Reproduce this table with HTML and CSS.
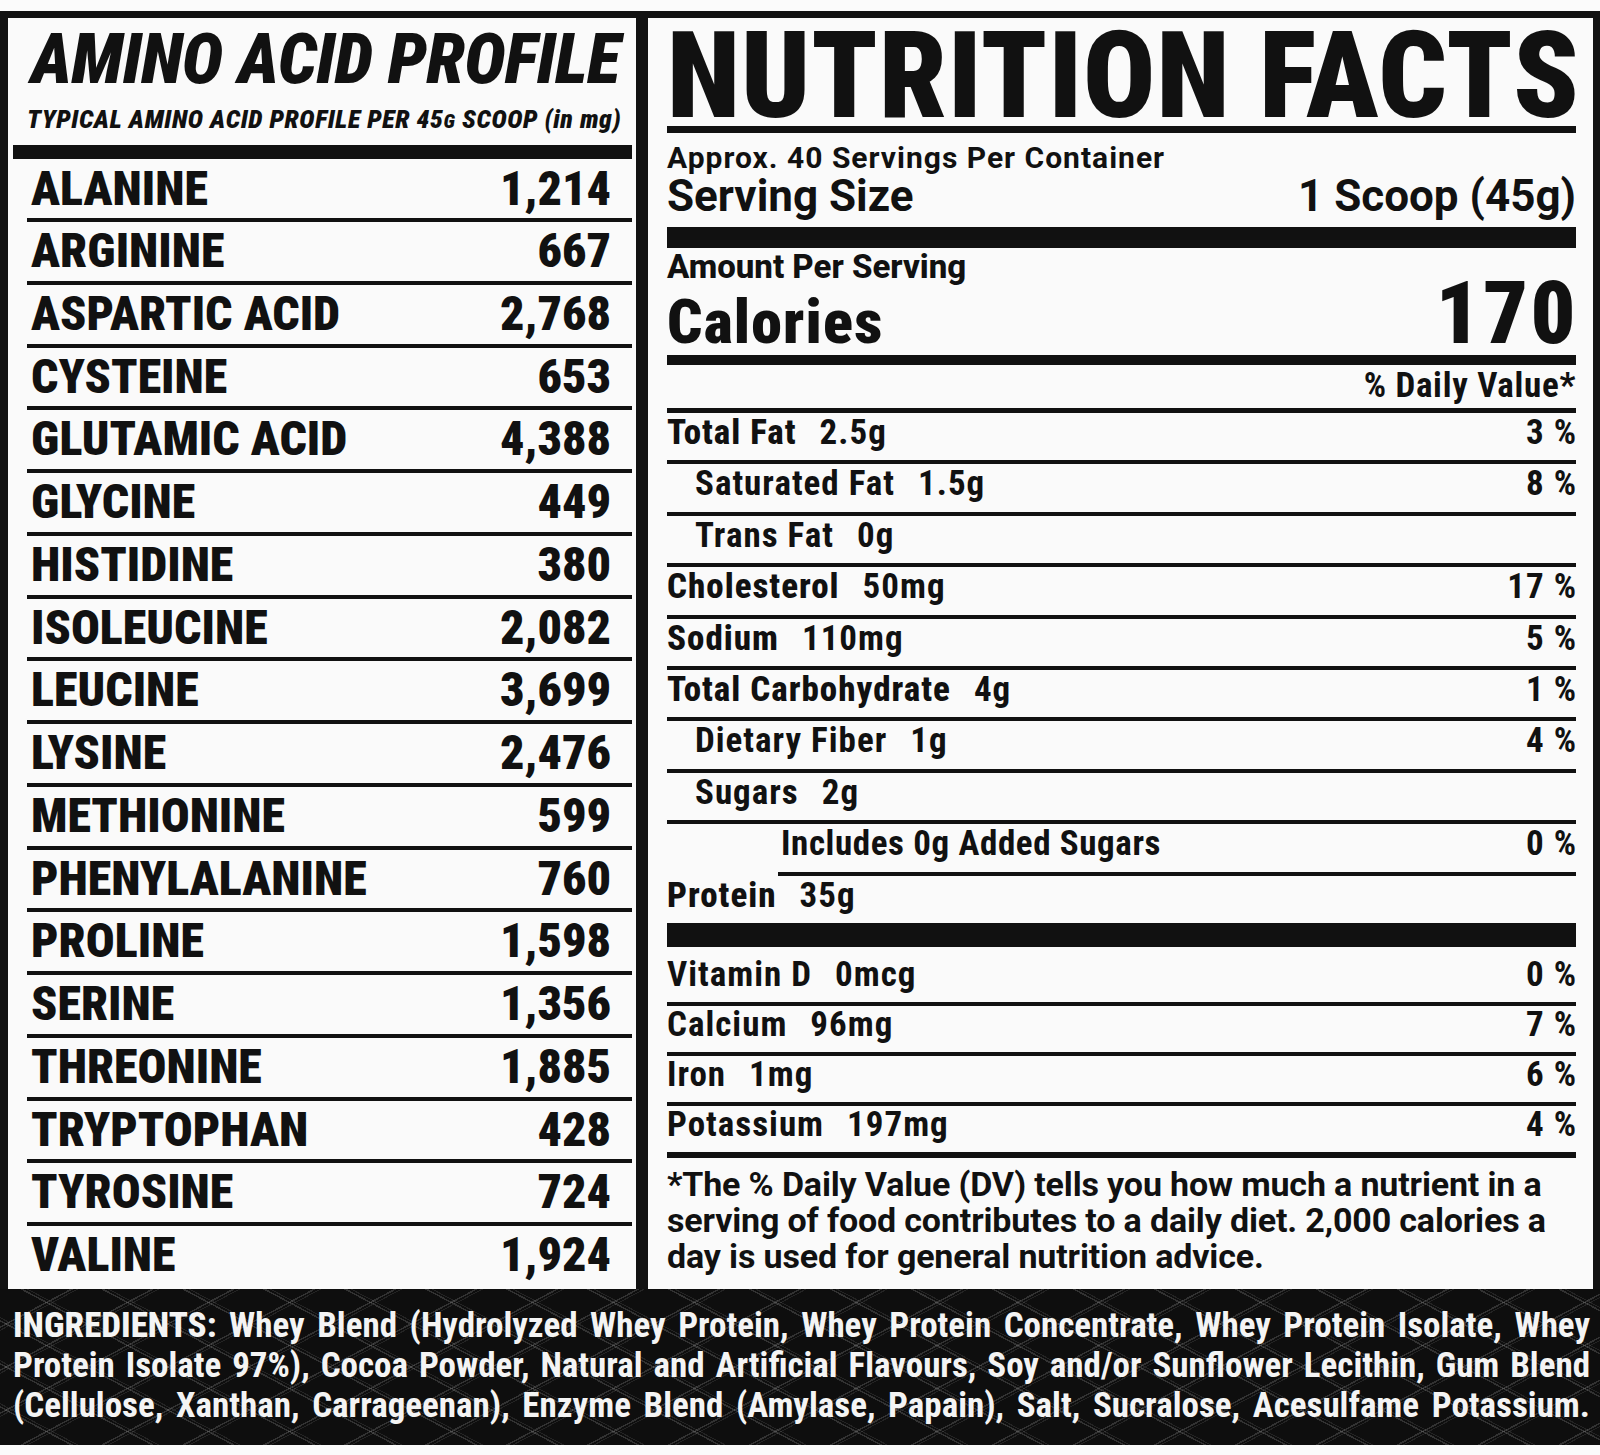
FILE: index.html
```html
<!DOCTYPE html>
<html lang="en">
<head>
<meta charset="utf-8">
<title>Amino Acid Profile &amp; Nutrition Facts</title>
<link rel="stylesheet" href="styles.css">
</head>
<body>
<div class="label">
  <div class="panels">
    <section class="amino">
      <h1 class="amino-title">AMINO ACID PROFILE</h1>
      <p class="amino-sub">TYPICAL AMINO ACID PROFILE PER 45<span class="small-g">G</span> SCOOP (in mg)</p>
      <div class="amino-bar"></div>
      <div class="amino-list">
        <div class="arow"><span>ALANINE</span><span>1,214</span></div>
        <div class="arow"><span>ARGININE</span><span>667</span></div>
        <div class="arow"><span>ASPARTIC ACID</span><span>2,768</span></div>
        <div class="arow"><span>CYSTEINE</span><span>653</span></div>
        <div class="arow"><span>GLUTAMIC ACID</span><span>4,388</span></div>
        <div class="arow"><span>GLYCINE</span><span>449</span></div>
        <div class="arow"><span>HISTIDINE</span><span>380</span></div>
        <div class="arow"><span>ISOLEUCINE</span><span>2,082</span></div>
        <div class="arow"><span>LEUCINE</span><span>3,699</span></div>
        <div class="arow"><span>LYSINE</span><span>2,476</span></div>
        <div class="arow"><span>METHIONINE</span><span>599</span></div>
        <div class="arow"><span>PHENYLALANINE</span><span>760</span></div>
        <div class="arow"><span>PROLINE</span><span>1,598</span></div>
        <div class="arow"><span>SERINE</span><span>1,356</span></div>
        <div class="arow"><span>THREONINE</span><span>1,885</span></div>
        <div class="arow"><span>TRYPTOPHAN</span><span>428</span></div>
        <div class="arow"><span>TYROSINE</span><span>724</span></div>
        <div class="arow"><span>VALINE</span><span>1,924</span></div>
      </div>
    </section>

    <section class="facts">
      <h1 class="facts-title">NUTRITION FACTS</h1>
      <div class="rule7"></div>
      <p class="servings">Approx. 40 Servings Per Container</p>
      <div class="serving-size"><span>Serving Size</span><span>1 Scoop (45g)</span></div>
      <div class="bar21"></div>
      <p class="amount">Amount Per Serving</p>
      <div class="calories"><span class="cal-label">Calories</span><span class="cal-value">170</span></div>
      <div class="bar10"></div>
      <p class="dv-head">% Daily Value*</p>

      <div class="nutrients">
        <div class="nrow first main"><span class="name">Total Fat<span class="amt">2.5g</span></span><span class="pct">3 %</span></div>
        <div class="nrow sub"><span class="name">Saturated Fat<span class="amt">1.5g</span></span><span class="pct">8 %</span></div>
        <div class="nrow sub"><span class="name">Trans Fat<span class="amt">0g</span></span><span class="pct"></span></div>
        <div class="nrow main"><span class="name">Cholesterol<span class="amt">50mg</span></span><span class="pct">17 %</span></div>
        <div class="nrow main"><span class="name">Sodium<span class="amt">110mg</span></span><span class="pct">5 %</span></div>
        <div class="nrow main"><span class="name">Total Carbohydrate<span class="amt">4g</span></span><span class="pct">1 %</span></div>
        <div class="nrow sub"><span class="name">Dietary Fiber<span class="amt">1g</span></span><span class="pct">4 %</span></div>
        <div class="nrow sub"><span class="name">Sugars<span class="amt">2g</span></span><span class="pct"></span></div>
        <div class="nrow added"><span class="name">Includes 0g Added Sugars</span><span class="pct">0 %</span></div>
        <div class="nrow protein main"><span class="name">Protein<span class="amt">35g</span></span><span class="pct"></span></div>
      </div>

      <div class="bar24"></div>

      <div class="vitamins">
        <div class="vrow vfirst"><span class="name">Vitamin D<span class="amt">0mcg</span></span><span class="pct">0 %</span></div>
        <div class="vrow"><span class="name">Calcium<span class="amt">96mg</span></span><span class="pct">7 %</span></div>
        <div class="vrow"><span class="name">Iron<span class="amt">1mg</span></span><span class="pct">6 %</span></div>
        <div class="vrow"><span class="name">Potassium<span class="amt">197mg</span></span><span class="pct">4 %</span></div>
      </div>
      <div class="rule6"></div>

      <p class="footnote">*The % Daily Value (DV) tells you how much a nutrient in a<br>serving of food contributes to a daily diet. 2,000 calories a<br>day is used for general nutrition advice.</p>
    </section>
  </div>

  <div class="ingredients">
    <p class="ing-line"><strong>INGREDIENTS:</strong> Whey Blend (Hydrolyzed Whey Protein, Whey Protein Concentrate, Whey Protein Isolate, Whey</p>
    <p class="ing-line">Protein Isolate 97%), Cocoa Powder, Natural and Artificial Flavours, Soy and/or Sunflower Lecithin, Gum Blend</p>
    <p class="ing-line">(Cellulose, Xanthan, Carrageenan), Enzyme Blend (Amylase, Papain), Salt, Sucralose, Acesulfame Potassium.</p>
  </div>
</div>
</body>
</html>
```

FILE: styles.css
```css
* { box-sizing: border-box; }

html, body {
  margin: 0;
  padding: 0;
  background: #fbfbfb;
}

body {
  width: 1600px;
  height: 1455px;
  overflow: hidden;
  font-family: "Roboto", "Liberation Sans", sans-serif;
  font-stretch: 75%;
  font-weight: 700;
  color: #111;
}

p, h1 { margin: 0; font-weight: 700; }

.label {
  margin-top: 11px;
  height: 1434px;
  background: #121212;
  display: flex;
  flex-direction: column;
}

.panels {
  display: grid;
  grid-template-columns: 628px 945px;
  column-gap: 12px;
  padding: 7px 7px 0 8px;
  height: 1278px;
}

/* ---------- Amino panel ---------- */
.amino {
  background: #fafafa;
  padding: 13px 4px 0 5px;
}

.amino-title {
  font-size: 70px;
  line-height: 56px;
  font-style: italic;
  font-weight: 900;
  letter-spacing: -0.5px;
  padding-left: 18px;
  white-space: nowrap;
}

.amino-sub {
  margin-top: 18px;
  font-size: 26px;
  line-height: 28px;
  font-style: italic;
  font-weight: 900;
  padding-left: 14px;
  white-space: nowrap;
  letter-spacing: 0.55px;
}

.small-g { font-size: 20px; }

.amino-bar {
  margin-top: 10px;
  height: 14px;
  background: #111;
}

.amino-list {
  margin-left: 14px;
}

.arow {
  display: flex;
  justify-content: space-between;
  height: 62.75px;
  line-height: 58.75px;
  border-top: 4px solid #111;
  padding: 0 21px 0 4px;
  font-size: 48px;
  font-weight: 900;
  white-space: nowrap;
}

.arow:first-child {
  border-top: 0;
  height: 59px;
  line-height: 59px;
}

/* ---------- Facts panel ---------- */
.facts {
  background: #fafafa;
  padding: 8px 17px 0 19px;
}

.facts-title {
  font-size: 120px;
  line-height: 100px;
  font-weight: 900;
  letter-spacing: 1px;
  white-space: nowrap;
}

.rule7 { height: 7px; background: #111; }
.rule6 { height: 6px; background: #111; }
.bar21 { height: 21px; background: #111; margin-top: 11px; }
.bar10 { height: 10px; background: #111; margin-top: 13px; }
.bar24 { height: 24px; background: #111; }

.servings {
  margin-top: 10px;
  font-size: 30px;
  line-height: 30px;
  font-stretch: 100%;
  letter-spacing: 1px;
}

.serving-size {
  margin-top: 3px;
  display: flex;
  justify-content: space-between;
  font-size: 44px;
  line-height: 40px;
  font-stretch: 100%;
}

.amount {
  margin-top: 2px;
  font-size: 33px;
  line-height: 34px;
  font-weight: 800;
  font-stretch: 100%;
}

.calories {
  display: flex;
  justify-content: space-between;
  align-items: baseline;
  line-height: 58px;
  height: 58px;
  font-weight: 900;
}

.cal-label { font-size: 62px; letter-spacing: 1.2px; }
.cal-value { font-size: 88px; letter-spacing: 2.5px; margin-right: -2px; }

.dv-head {
  margin-top: 3px;
  margin-bottom: 4px;
  font-size: 35px;
  line-height: 36px;
  text-align: right;
  letter-spacing: 0.7px;
}

.nrow, .vrow {
  display: flex;
  justify-content: space-between;
  font-size: 35px;
  white-space: nowrap;
  border-top: 4px solid #111;
  letter-spacing: 1px;
}

.nrow {
  line-height: 40px;
  padding-bottom: 7.4px;
}

.nrow.first { border-top-width: 5px; }

.nrow.main .name { font-weight: 800; }
.nrow.sub .name { padding-left: 28px; }
.nrow.added .name { padding-left: 114px; letter-spacing: 0.6px; }

.nrow.protein {
  border-top: 0;
  padding-top: 4px;
  background: linear-gradient(#111, #111) 111px 0 / calc(100% - 111px) 4px no-repeat;
}

.amt { margin-left: 23px; font-weight: 700; }

.pct { margin-right: -1px; }

.vrow {
  line-height: 38px;
  padding-bottom: 8px;
}

.vrow.vfirst {
  border-top: 0;
  padding-top: 8px;
  line-height: 40px;
  padding-bottom: 7px;
}

.footnote {
  margin-top: 8px;
  font-size: 34px;
  line-height: 36px;
  font-stretch: 100%;
  letter-spacing: -0.15px;
  white-space: nowrap;
}

/* ---------- Ingredients ---------- */
.ingredients {
  flex: 1;
  padding: 17px 10px 0 13px;
  color: #f4f4f4;
  background-color: #0e0e0e;
  background-image:
    repeating-linear-gradient(28deg, transparent 0 33px, rgba(255,255,255,0.15) 33px 34.5px, transparent 34.5px 36px, rgba(255,255,255,0.09) 36px 37px, transparent 37px 38px),
    repeating-linear-gradient(152deg, transparent 0 33px, rgba(255,255,255,0.15) 33px 34.5px, transparent 34.5px 36px, rgba(255,255,255,0.09) 36px 37px, transparent 37px 38px);
}

.ing-line {
  font-size: 35px;
  line-height: 40px;
  white-space: nowrap;
  text-align: justify;
  text-align-last: justify;
}

.ing-line strong { font-weight: 800; }
```
